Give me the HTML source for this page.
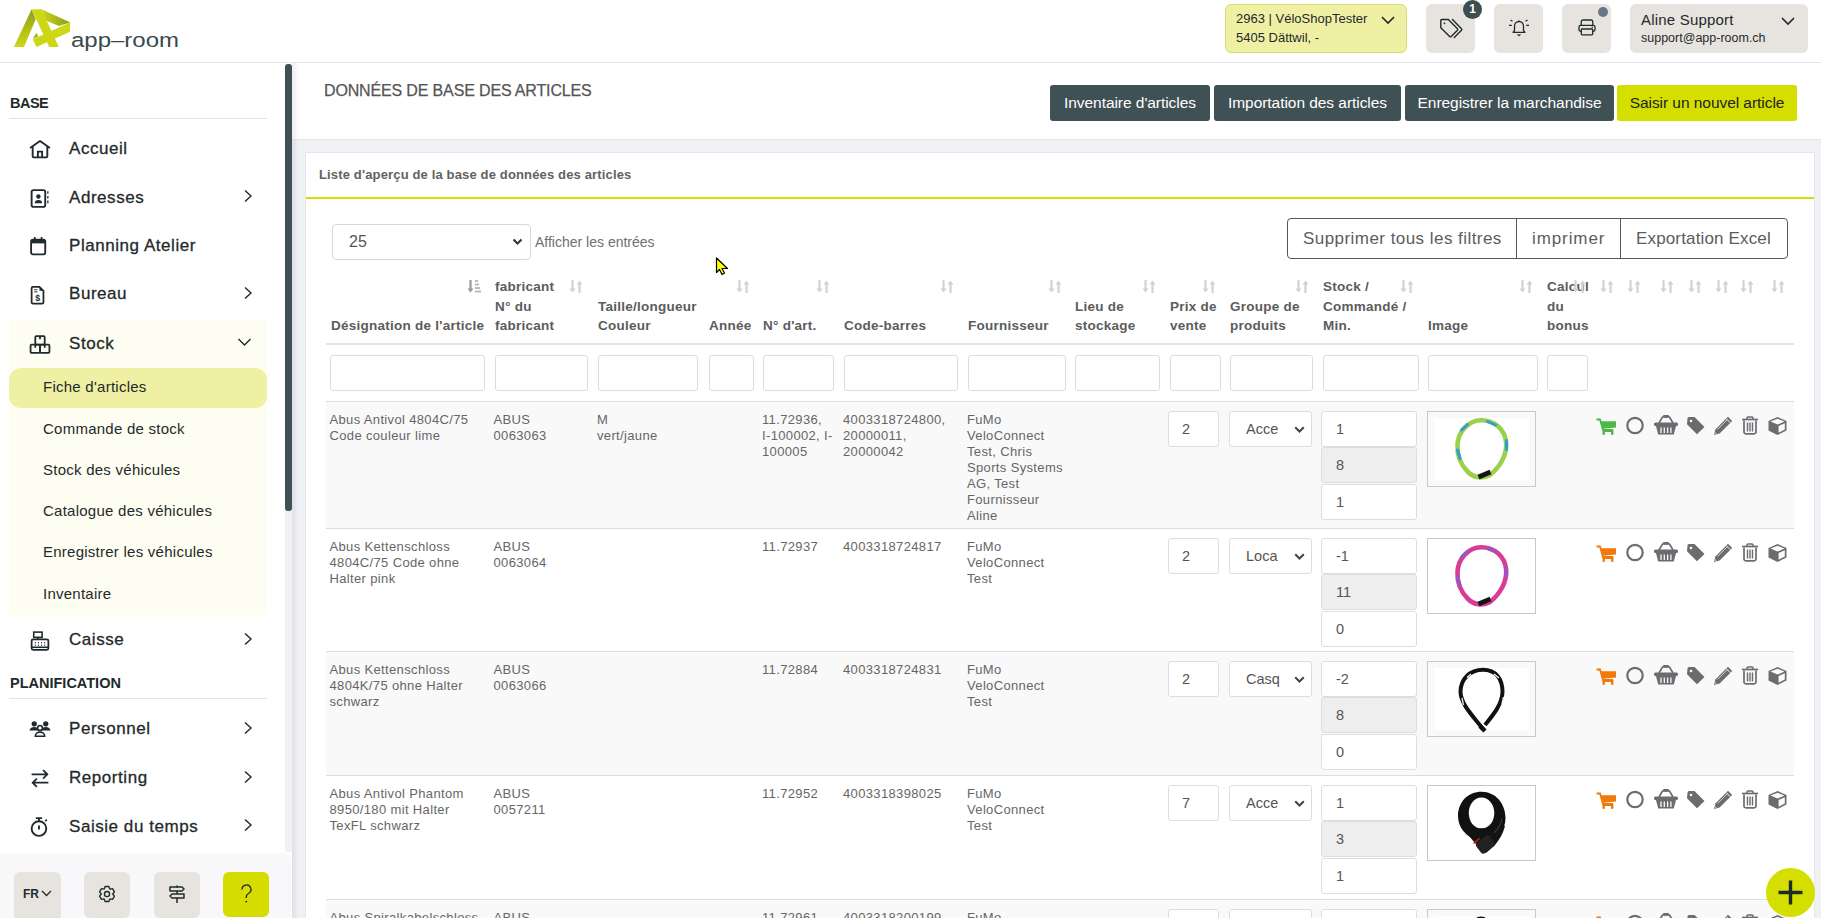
<!DOCTYPE html><html><head><meta charset="utf-8"><style>
*{box-sizing:border-box;margin:0;padding:0}
html,body{width:1821px;height:918px;overflow:hidden;background:#fff;font-family:"Liberation Sans",sans-serif}
.ab{position:absolute}
.t{position:absolute;white-space:nowrap;line-height:1}
.sb{color:#1f2a2c}
.nav{position:absolute;left:69px;font-size:17px;letter-spacing:0.55px;color:#1f2a2c;white-space:nowrap;line-height:1;-webkit-text-stroke:0.3px #1f2a2c}
.sub{position:absolute;left:43px;font-size:15px;letter-spacing:0.25px;color:#1f2a2c;white-space:nowrap;line-height:1}
.chev{position:absolute;left:243px;width:10px;height:14px}
.hb{position:absolute;top:4px;height:49px;background:#e7e4df;border-radius:6px}
.btn{position:absolute;top:85px;height:36px;background:#3f5154;color:#fff;border-radius:3px;font-size:15.5px;letter-spacing:-0.05px;line-height:36px;text-align:center;white-space:nowrap}
.th{position:absolute;margin-top:1px;font-size:13.5px;font-weight:bold;color:#5c5c5c;line-height:19.5px;white-space:nowrap;letter-spacing:0.25px}
.fi{position:absolute;top:355px;height:36px;border:1px solid #dcdcdc;border-radius:3px;background:#fff}
.sort{position:absolute;top:280px;width:14px;height:13px}
.row{position:absolute;left:326px;width:1468px;border-top:1px solid #ddd}
.c{position:absolute;margin-top:1px;font-size:13px;color:#666;line-height:16px;white-space:nowrap;letter-spacing:0.35px}
.inp{position:absolute;height:36px;border:1px solid #ddd;border-radius:3px;background:#fff;font-size:14.5px;color:#555;line-height:34px}
.img{position:absolute;width:109px;height:76px;border:1px solid #c8c8c8}
</style></head><body>
<div class="ab" style="left:0;top:0;width:1821px;height:63px;background:#fff;border-bottom:1px solid #e6e6ea"></div>
<svg class="ab" style="left:0;top:0" width="70" height="50" viewBox="0 0 70 50">
<defs>
<linearGradient id="lg1" x1="0" y1="0" x2="0" y2="1"><stop offset="0" stop-color="#8f9a1e"/><stop offset="0.55" stop-color="#b3bf18"/><stop offset="1" stop-color="#cbd716"/></linearGradient>
<linearGradient id="lg2" x1="0" y1="0" x2="1" y2="0"><stop offset="0" stop-color="#cbd716"/><stop offset="1" stop-color="#8f9a1e"/></linearGradient>
</defs>
<polygon points="31.6,9.2 35.7,19.2 24,46.9 13.9,46.9" fill="url(#lg1)"/>
<polygon points="41.4,9.2 70.5,22.4 59,26 46.3,20.7" fill="url(#lg2)"/>
<polygon points="31.6,9.2 41.4,9.2 58.8,46.9 49.2,46.9" fill="#ccd816"/>
<polygon points="70.5,22.4 70.3,31.7 36.5,46.9 32.8,39.3" fill="#ccd816"/>
<polygon points="32.8,38.8 36.5,32.7 38.2,36.4" fill="#a5b01a"/>
</svg>
<svg class="ab" style="left:70px;top:24px" width="115" height="30"><text x="1" y="22.8" font-family="Liberation Sans" font-size="20.5" fill="#384a4d" textLength="108" lengthAdjust="spacingAndGlyphs">app–room</text></svg>
<div class="ab" style="left:1225px;top:4px;width:182px;height:49px;background:#f0f0a5;border:1px solid #d9dc70;border-radius:6px"></div>
<div class="t" style="left:1236px;top:12px;font-size:13px;color:#1f2a2c">2963 | VéloShopTester</div>
<div class="t" style="left:1236px;top:31px;font-size:13px;color:#1f2a2c">5405 Dättwil, -</div>
<svg class="ab" style="left:1381px;top:15px" width="14" height="10"><polyline points="1,2 7,8 13,2" fill="none" stroke="#1f2a2c" stroke-width="1.6"/></svg>
<div class="hb" style="left:1426px;width:49px"></div>
<svg class="ab" style="left:1439px;top:18px" width="26" height="22" viewBox="0 0 26 22"><path d="M1.8 2.5 a1 1 0 0 1 1 -1 h6.5 l9.2 9.2 a1.2 1.2 0 0 1 0 1.6 l-6.3 6.3 a1.2 1.2 0 0 1 -1.6 0 l-8.8 -8.8 z" fill="none" stroke="#1f2a2c" stroke-width="1.4" stroke-linejoin="round"/><path d="M13.5 1.5 l9 9.2 a1.2 1.2 0 0 1 0 1.6 l-7.2 7.2" fill="none" stroke="#1f2a2c" stroke-width="1.4" stroke-linejoin="round" stroke-linecap="round"/><circle cx="5.5" cy="5.3" r="0.9" fill="#1f2a2c"/></svg>
<div class="ab" style="left:1463px;top:-0.5px;width:19px;height:19px;border-radius:50%;background:#3d4e50;color:#fff;font-size:12px;font-weight:bold;text-align:center;line-height:19px">1</div>
<div class="hb" style="left:1494px;width:49px"></div>
<svg class="ab" style="left:1508px;top:18px" width="22" height="19" viewBox="0 0 22 19"><path d="M6.5 12.5 v-4.5 a4.5 4.5 0 0 1 9 0 v4.5 l1.5 1.8 h-12 z" fill="none" stroke="#1f2a2c" stroke-width="1.3" stroke-linejoin="round"/><path d="M9.5 16.5 l1.5 1 1.5 -1" fill="none" stroke="#1f2a2c" stroke-width="1.2"/><path d="M1 7.3 h2.8 M18.2 7.3 h2.8 M2.5 2 l2 1.3 M19.5 2 l-2 1.3 M11 2.2 v0.6" stroke="#1f2a2c" stroke-width="1.2"/></svg>
<div class="hb" style="left:1562px;width:49px"></div>
<svg class="ab" style="left:1578px;top:19px" width="18" height="17" viewBox="0 0 18 17"><path d="M3.2 6 v-3.2 a1.8 1.8 0 0 1 1.8 -1.8 h8 a1.8 1.8 0 0 1 1.8 1.8 v3.2" fill="none" stroke="#1f2a2c" stroke-width="1.3"/><rect x="1" y="6.3" width="16" height="6" rx="1.8" fill="none" stroke="#1f2a2c" stroke-width="1.3"/><rect x="3.3" y="10" width="11.4" height="5.8" rx="0.8" fill="#e7e4df" stroke="#1f2a2c" stroke-width="1.3"/><circle cx="14.2" cy="8.3" r="0.7" fill="#1f2a2c"/></svg>
<div class="ab" style="left:1598px;top:7px;width:10px;height:10px;border-radius:50%;background:#67758a"></div>
<div class="hb" style="left:1630px;width:178px"></div>
<div class="t" style="left:1641px;top:12px;font-size:15px;letter-spacing:0.2px;color:#1f2a2c">Aline Support</div>
<div class="t" style="left:1641px;top:32px;font-size:12.5px;color:#1f2a2c">support@app-room.ch</div>
<svg class="ab" style="left:1781px;top:16px" width="14" height="10"><polyline points="1,2 7,8 13,2" fill="none" stroke="#1f2a2c" stroke-width="1.6"/></svg>
<div class="ab" style="left:0;top:63px;width:292px;height:855px;background:#fff"></div>
<div class="ab" style="left:292px;top:63px;width:10px;height:855px;background:linear-gradient(to right,rgba(0,0,0,0.07),rgba(0,0,0,0))"></div>
<div class="ab" style="left:285px;top:64px;width:7px;height:788px;background:#f1f1f3;border-radius:3px"></div>
<div class="ab" style="left:285px;top:64px;width:7px;height:447px;background:#3f5154;border-radius:3px"></div>
<div class="t" style="left:10px;top:95.5px;font-size:14.5px;font-weight:bold;color:#1f2a2c;letter-spacing:-0.5px">BASE</div>
<div class="ab" style="left:9px;top:118px;width:258px;height:1px;background:#e3e4ea"></div>
<div class="ab" style="left:9px;top:319px;width:258px;height:296px;background:#fdfdf1"></div>
<div class="ab" style="left:9px;top:368px;width:258px;height:40px;background:#eff0a3;border-radius:12px"></div>
<div class="nav" style="top:139.5px">Accueil</div>
<div class="nav" style="top:188.5px">Adresses</div>
<svg class="chev" style="top:189.2px" viewBox="0 0 10 14"><polyline points="2,1.5 8,7 2,12.5" fill="none" stroke="#1f2a2c" stroke-width="1.4"/></svg>
<div class="nav" style="top:236.8px">Planning Atelier</div>
<div class="nav" style="top:285.4px">Bureau</div>
<svg class="chev" style="top:286.1px" viewBox="0 0 10 14"><polyline points="2,1.5 8,7 2,12.5" fill="none" stroke="#1f2a2c" stroke-width="1.4"/></svg>
<div class="nav" style="top:335.0px">Stock</div>
<div class="nav" style="top:631.3px">Caisse</div>
<svg class="chev" style="top:632.0px" viewBox="0 0 10 14"><polyline points="2,1.5 8,7 2,12.5" fill="none" stroke="#1f2a2c" stroke-width="1.4"/></svg>
<div class="nav" style="top:719.8px">Personnel</div>
<svg class="chev" style="top:720.5px" viewBox="0 0 10 14"><polyline points="2,1.5 8,7 2,12.5" fill="none" stroke="#1f2a2c" stroke-width="1.4"/></svg>
<div class="nav" style="top:769.0px">Reporting</div>
<svg class="chev" style="top:769.7px" viewBox="0 0 10 14"><polyline points="2,1.5 8,7 2,12.5" fill="none" stroke="#1f2a2c" stroke-width="1.4"/></svg>
<div class="nav" style="top:817.5px">Saisie du temps</div>
<svg class="chev" style="top:818.2px" viewBox="0 0 10 14"><polyline points="2,1.5 8,7 2,12.5" fill="none" stroke="#1f2a2c" stroke-width="1.4"/></svg>
<svg class="ab" style="left:237px;top:337px" width="15" height="10"><polyline points="1.5,2 7.5,8 13.5,2" fill="none" stroke="#1f2a2c" stroke-width="1.4"/></svg>
<div class="sub" style="top:379.4px">Fiche d'articles</div>
<div class="sub" style="top:421.2px">Commande de stock</div>
<div class="sub" style="top:462.2px">Stock des véhicules</div>
<div class="sub" style="top:503.4px">Catalogue des véhicules</div>
<div class="sub" style="top:544.4px">Enregistrer les véhicules</div>
<div class="sub" style="top:585.9px">Inventaire</div>
<div class="t" style="left:10px;top:675.5px;font-size:14.5px;font-weight:bold;color:#1f2a2c;letter-spacing:0px">PLANIFICATION</div>
<div class="ab" style="left:9px;top:698px;width:258px;height:1px;background:#e3e4ea"></div>
<svg class="ab" style="left:28px;top:137.7px" width="24" height="22" viewBox="0 0 22 21"><path d="M1.5 9.5 L11 2.8 L20.5 9.5" fill="none" stroke="#1f2a2c" stroke-width="1.8" stroke-linejoin="round"/><path d="M4 8 V17.5 a1 1 0 0 0 1 1 H17 a1 1 0 0 0 1 -1 V8" fill="none" stroke="#1f2a2c" stroke-width="1.8"/><path d="M9 18.5 V13 H13 V18.5" fill="none" stroke="#1f2a2c" stroke-width="1.8"/></svg>
<svg class="ab" style="left:28px;top:186.7px" width="24" height="22" viewBox="0 0 22 21"><rect x="3" y="3" width="13" height="16" rx="1.8" fill="none" stroke="#1f2a2c" stroke-width="1.8"/><circle cx="9.5" cy="9" r="2.1" fill="#1f2a2c"/><path d="M6 15.5 a3.5 3 0 0 1 7 0 z" fill="#1f2a2c"/><path d="M18.5 4 v2.5 M18.5 8.5 v2.5 M18.5 13 v2.5" stroke="#1f2a2c" stroke-width="1.2"/></svg>
<svg class="ab" style="left:28px;top:235.0px" width="24" height="22" viewBox="0 0 22 21"><rect x="2.5" y="4.5" width="13.5" height="14" rx="1.8" fill="none" stroke="#1f2a2c" stroke-width="1.8"/><rect x="2.5" y="4.5" width="13.5" height="3.5" fill="#1f2a2c"/><path d="M6 2 v3 M12.5 2 v3" stroke="#1f2a2c" stroke-width="1.6"/></svg>
<svg class="ab" style="left:28px;top:283.6px" width="24" height="22" viewBox="0 0 22 21"><path d="M3 4 a1.3 1.3 0 0 1 1.3 -1.3 h6.2 l3.8 3.8 v11 a1.3 1.3 0 0 1 -1.3 1.3 h-8.7 a1.3 1.3 0 0 1 -1.3 -1.3 z" fill="none" stroke="#1f2a2c" stroke-width="1.7"/><path d="M10.5 2.7 v3.8 h3.8 z" fill="#1f2a2c"/><path d="M5.5 5.5 h3 M5.5 7.5 h3" stroke="#1f2a2c" stroke-width="0.9"/><text x="8.8" y="16.3" font-size="8.5" font-weight="bold" text-anchor="middle" fill="#1f2a2c" font-family="Liberation Sans">$</text></svg>
<svg class="ab" style="left:28px;top:333.2px" width="24" height="22" viewBox="0 0 22 21"><rect x="2" y="11" width="9" height="8" rx="1" fill="none" stroke="#1f2a2c" stroke-width="1.7"/><rect x="11" y="11" width="9" height="8" rx="1" fill="none" stroke="#1f2a2c" stroke-width="1.7"/><rect x="6.5" y="3" width="9" height="8" rx="1" fill="none" stroke="#1f2a2c" stroke-width="1.7"/><path d="M11 3 v3 M6.5 11 v3 M15.5 11 v3" stroke="#1f2a2c" stroke-width="1.7"/></svg>
<svg class="ab" style="left:28px;top:629.5px" width="24" height="22" viewBox="0 0 22 21"><rect x="3" y="9" width="16" height="10" rx="1.5" fill="none" stroke="#1f2a2c" stroke-width="1.7"/><rect x="5" y="2" width="8" height="5" fill="none" stroke="#1f2a2c" stroke-width="1.5"/><path d="M9 7 v2" stroke="#1f2a2c" stroke-width="1.5"/><path d="M6 12 h1 M9 12 h1 M12 12 h1 M15 12 h1 M6 14.5 h1 M9 14.5 h1 M12 14.5 h1 M15 14.5 h1" stroke="#1f2a2c" stroke-width="1.3"/><path d="M3 16.5 h16" stroke="#1f2a2c" stroke-width="1.5"/></svg>
<svg class="ab" style="left:28px;top:718.0px" width="24" height="22" viewBox="0 0 22 21"><circle cx="5.5" cy="5.5" r="2.5" fill="#1f2a2c"/><circle cx="16.5" cy="5.5" r="2.5" fill="#1f2a2c"/><path d="M1 12 a4.5 3.5 0 0 1 9 0 z M12 12 a4.5 3.5 0 0 1 9 0 z" fill="#1f2a2c"/><circle cx="11" cy="9.5" r="2.3" fill="#fff" stroke="#1f2a2c" stroke-width="1.5"/><path d="M6.5 17.5 a4.5 4 0 0 1 9 0 z" fill="#fff" stroke="#1f2a2c" stroke-width="1.5"/></svg>
<svg class="ab" style="left:28px;top:767.2px" width="24" height="22" viewBox="0 0 22 21"><path d="M3 7 h15 M14 3 l4 4 -4 4" fill="none" stroke="#1f2a2c" stroke-width="1.7"/><path d="M19 15 h-15 M8 11 l-4 4 4 4" fill="none" stroke="#1f2a2c" stroke-width="1.7"/></svg>
<svg class="ab" style="left:28px;top:815.7px" width="24" height="22" viewBox="0 0 22 21"><circle cx="10" cy="12" r="7" fill="none" stroke="#1f2a2c" stroke-width="1.8"/><path d="M7 2 h6 M10 2 v3 M10 9 v4" stroke="#1f2a2c" stroke-width="1.8"/><path d="M16 5 l1.5 -1.5" stroke="#1f2a2c" stroke-width="1.6"/></svg>
<div class="ab" style="left:0;top:853px;width:291px;height:65px;background:#f8f8fa;border-top-right-radius:8px"></div>
<div class="ab" style="left:14px;top:872px;width:47px;height:50px;background:#e7e4df;border-radius:6px"></div>
<div class="t" style="left:23px;top:887.5px;font-size:12px;font-weight:bold;color:#1f2a2c">FR</div>
<svg class="ab" style="left:41px;top:890px" width="11" height="7"><polyline points="1,1 5.5,5.5 10,1" fill="none" stroke="#1f2a2c" stroke-width="1.3"/></svg>
<div class="ab" style="left:84px;top:872px;width:46px;height:46px;background:#e7e4df;border-radius:6px"></div>
<svg class="ab" style="left:98px;top:885px" width="18" height="18" viewBox="0 0 24 24"><path d="M9.51 2.01 L14.49 2.01 L15.80 5.42 L19.41 4.85 L21.90 9.16 L19.60 12.00 L21.90 14.84 L19.41 19.15 L15.80 18.58 L14.49 21.99 L9.51 21.99 L8.20 18.58 L4.59 19.15 L2.10 14.84 L4.40 12.00 L2.10 9.16 L4.59 4.85 L8.20 5.42 Z" fill="none" stroke="#1f2a2c" stroke-width="1.8" stroke-linejoin="round"/><circle cx="12" cy="12" r="3.4" fill="none" stroke="#1f2a2c" stroke-width="1.8"/></svg>
<div class="ab" style="left:154px;top:872px;width:46px;height:46px;background:#e7e4df;border-radius:6px"></div>
<svg class="ab" style="left:168px;top:885px" width="18" height="18" viewBox="0 0 18 18"><path d="M2 2 h12 l2 2 -2 2 h-12 z M16 9 h-12 l-2 2 2 2 h12 z" fill="none" stroke="#1f2a2c" stroke-width="1.5" stroke-linejoin="round"/><path d="M9 0.5 v2 M9 6 v3 M9 13 v5" stroke="#1f2a2c" stroke-width="1.5"/></svg>
<div class="ab" style="left:223px;top:872px;width:46px;height:45px;background:#d4dc00;border-radius:6px"></div>
<svg class="ab" style="left:240px;top:884px" width="13" height="20" viewBox="0 0 13 20"><path d="M2 5.5 a4.5 4.5 0 1 1 6.5 4 c-1.5 0.8 -2.2 1.6 -2.2 3.3 v1.2" fill="none" stroke="#1f2a2c" stroke-width="1.3"/><circle cx="6.3" cy="17.6" r="0.9" fill="#1f2a2c"/></svg>
<div class="ab" style="left:292px;top:63px;width:1529px;height:855px;background:#f0f1f4"></div>
<div class="ab" style="left:292px;top:63px;width:1529px;height:77px;background:#fff;border-bottom:1px solid #e4e5e9"></div>
<div class="ab" style="left:292px;top:63px;width:7px;height:855px;background:linear-gradient(to right,rgba(0,0,0,0.07),rgba(0,0,0,0))"></div>
<div class="t" style="left:324px;top:83px;font-size:16px;color:#555;letter-spacing:-0.15px;-webkit-text-stroke:0.25px #555">DONNÉES DE BASE DES ARTICLES</div>
<div class="btn" style="left:1050px;width:160px;background:#3f5154;color:#fff">Inventaire d'articles</div>
<div class="btn" style="left:1214px;width:187px;background:#3f5154;color:#fff">Importation des articles</div>
<div class="btn" style="left:1405px;width:209px;background:#3f5154;color:#fff">Enregistrer la marchandise</div>
<div class="btn" style="left:1617px;width:180px;background:#d4df00;color:#222">Saisir un nouvel article</div>
<div class="ab" style="left:305px;top:152px;width:1510px;height:766px;background:#fff;border:1px solid #e6e7ea;border-bottom:none"></div>
<div class="t" style="left:319px;top:168px;font-size:13px;font-weight:bold;color:#626262;letter-spacing:0.15px">Liste d&#39;aperçu de la base de données des articles</div>
<div class="ab" style="left:306px;top:197px;width:1508px;height:2px;background:#d4df00"></div>
<div class="ab" style="left:332px;top:224px;width:199px;height:36px;border:1px solid #d8d8d8;border-radius:4px;background:#fff"></div>
<div class="t" style="left:349px;top:234px;font-size:16px;color:#555">25</div>
<svg class="ab" style="left:512px;top:238px" width="11" height="8"><polyline points="1.5,1.5 5.5,5.5 9.5,1.5" fill="none" stroke="#333" stroke-width="2"/></svg>
<div class="t" style="left:535px;top:235px;font-size:14px;color:#707070">Afficher les entrées</div>
<div class="ab" style="left:1287px;top:218px;width:501px;height:41px;border:1px solid #4d5a5c;border-radius:4px;background:#fff"></div>
<div class="ab" style="left:1516px;top:218px;width:1px;height:41px;background:#4d5a5c"></div>
<div class="ab" style="left:1620px;top:218px;width:1px;height:41px;background:#4d5a5c"></div>
<div class="t" style="left:1303px;top:230px;font-size:17px;color:#5c5c5c;letter-spacing:0.45px">Supprimer tous les filtres</div>
<div class="t" style="left:1532px;top:230px;font-size:17px;color:#5c5c5c;letter-spacing:0.9px">imprimer</div>
<div class="t" style="left:1636px;top:230px;font-size:17px;color:#5c5c5c;letter-spacing:0.15px">Exportation Excel</div>
<div class="th" style="left:331px;top:315.0px">Désignation de l&#39;article</div>
<div class="th" style="left:495px;top:276.0px">fabricant</div>
<div class="th" style="left:495px;top:295.5px">N° du</div>
<div class="th" style="left:495px;top:315.0px">fabricant</div>
<div class="th" style="left:598px;top:295.5px">Taille/longueur</div>
<div class="th" style="left:598px;top:315.0px">Couleur</div>
<div class="th" style="left:709px;top:315.0px">Année</div>
<div class="th" style="left:763px;top:315.0px">N° d&#39;art.</div>
<div class="th" style="left:844px;top:315.0px">Code-barres</div>
<div class="th" style="left:968px;top:315.0px">Fournisseur</div>
<div class="th" style="left:1075px;top:295.5px">Lieu de</div>
<div class="th" style="left:1075px;top:315.0px">stockage</div>
<div class="th" style="left:1170px;top:295.5px">Prix de</div>
<div class="th" style="left:1170px;top:315.0px">vente</div>
<div class="th" style="left:1230px;top:295.5px">Groupe de</div>
<div class="th" style="left:1230px;top:315.0px">produits</div>
<div class="th" style="left:1323px;top:276.0px">Stock /</div>
<div class="th" style="left:1323px;top:295.5px">Commandé /</div>
<div class="th" style="left:1323px;top:315.0px">Min.</div>
<div class="th" style="left:1428px;top:315.0px">Image</div>
<div class="th" style="left:1547px;top:276.0px">Calcul</div>
<div class="th" style="left:1547px;top:295.5px">du</div>
<div class="th" style="left:1547px;top:315.0px">bonus</div>
<div class="ab" style="left:326px;top:343px;width:1468px;height:2px;background:#e2e2e2"></div>
<div class="fi" style="left:330px;width:155px"></div>
<div class="fi" style="left:495px;width:93px"></div>
<div class="fi" style="left:598px;width:100px"></div>
<div class="fi" style="left:709px;width:45px"></div>
<div class="fi" style="left:763px;width:71px"></div>
<div class="fi" style="left:844px;width:114px"></div>
<div class="fi" style="left:968px;width:98px"></div>
<div class="fi" style="left:1075px;width:85px"></div>
<div class="fi" style="left:1170px;width:51px"></div>
<div class="fi" style="left:1230px;width:83px"></div>
<div class="fi" style="left:1323px;width:96px"></div>
<div class="fi" style="left:1428px;width:110px"></div>
<div class="fi" style="left:1547px;width:41px"></div>
<svg class="sort" style="left:569px" viewBox="0 0 14 13"><path d="M3.5 0 v10" stroke="#d2d2d2" stroke-width="2.2"/><path d="M0.5 8.5 l3 4 3 -4z" fill="#d2d2d2"/><path d="M10.5 13 v-10" stroke="#d2d2d2" stroke-width="2.2"/><path d="M7.5 4.5 l3 -4 3 4z" fill="#d2d2d2"/></svg>
<svg class="sort" style="left:735.5px" viewBox="0 0 14 13"><path d="M3.5 0 v10" stroke="#d2d2d2" stroke-width="2.2"/><path d="M0.5 8.5 l3 4 3 -4z" fill="#d2d2d2"/><path d="M10.5 13 v-10" stroke="#d2d2d2" stroke-width="2.2"/><path d="M7.5 4.5 l3 -4 3 4z" fill="#d2d2d2"/></svg>
<svg class="sort" style="left:816px" viewBox="0 0 14 13"><path d="M3.5 0 v10" stroke="#d2d2d2" stroke-width="2.2"/><path d="M0.5 8.5 l3 4 3 -4z" fill="#d2d2d2"/><path d="M10.5 13 v-10" stroke="#d2d2d2" stroke-width="2.2"/><path d="M7.5 4.5 l3 -4 3 4z" fill="#d2d2d2"/></svg>
<svg class="sort" style="left:940px" viewBox="0 0 14 13"><path d="M3.5 0 v10" stroke="#d2d2d2" stroke-width="2.2"/><path d="M0.5 8.5 l3 4 3 -4z" fill="#d2d2d2"/><path d="M10.5 13 v-10" stroke="#d2d2d2" stroke-width="2.2"/><path d="M7.5 4.5 l3 -4 3 4z" fill="#d2d2d2"/></svg>
<svg class="sort" style="left:1048px" viewBox="0 0 14 13"><path d="M3.5 0 v10" stroke="#d2d2d2" stroke-width="2.2"/><path d="M0.5 8.5 l3 4 3 -4z" fill="#d2d2d2"/><path d="M10.5 13 v-10" stroke="#d2d2d2" stroke-width="2.2"/><path d="M7.5 4.5 l3 -4 3 4z" fill="#d2d2d2"/></svg>
<svg class="sort" style="left:1142px" viewBox="0 0 14 13"><path d="M3.5 0 v10" stroke="#d2d2d2" stroke-width="2.2"/><path d="M0.5 8.5 l3 4 3 -4z" fill="#d2d2d2"/><path d="M10.5 13 v-10" stroke="#d2d2d2" stroke-width="2.2"/><path d="M7.5 4.5 l3 -4 3 4z" fill="#d2d2d2"/></svg>
<svg class="sort" style="left:1202px" viewBox="0 0 14 13"><path d="M3.5 0 v10" stroke="#d2d2d2" stroke-width="2.2"/><path d="M0.5 8.5 l3 4 3 -4z" fill="#d2d2d2"/><path d="M10.5 13 v-10" stroke="#d2d2d2" stroke-width="2.2"/><path d="M7.5 4.5 l3 -4 3 4z" fill="#d2d2d2"/></svg>
<svg class="sort" style="left:1295px" viewBox="0 0 14 13"><path d="M3.5 0 v10" stroke="#d2d2d2" stroke-width="2.2"/><path d="M0.5 8.5 l3 4 3 -4z" fill="#d2d2d2"/><path d="M10.5 13 v-10" stroke="#d2d2d2" stroke-width="2.2"/><path d="M7.5 4.5 l3 -4 3 4z" fill="#d2d2d2"/></svg>
<svg class="sort" style="left:1400px" viewBox="0 0 14 13"><path d="M3.5 0 v10" stroke="#d2d2d2" stroke-width="2.2"/><path d="M0.5 8.5 l3 4 3 -4z" fill="#d2d2d2"/><path d="M10.5 13 v-10" stroke="#d2d2d2" stroke-width="2.2"/><path d="M7.5 4.5 l3 -4 3 4z" fill="#d2d2d2"/></svg>
<svg class="sort" style="left:1519px" viewBox="0 0 14 13"><path d="M3.5 0 v10" stroke="#d2d2d2" stroke-width="2.2"/><path d="M0.5 8.5 l3 4 3 -4z" fill="#d2d2d2"/><path d="M10.5 13 v-10" stroke="#d2d2d2" stroke-width="2.2"/><path d="M7.5 4.5 l3 -4 3 4z" fill="#d2d2d2"/></svg>
<svg class="sort" style="left:1572px" viewBox="0 0 14 13"><path d="M3.5 0 v10" stroke="#d2d2d2" stroke-width="2.2"/><path d="M0.5 8.5 l3 4 3 -4z" fill="#d2d2d2"/><path d="M10.5 13 v-10" stroke="#d2d2d2" stroke-width="2.2"/><path d="M7.5 4.5 l3 -4 3 4z" fill="#d2d2d2"/></svg>
<svg class="sort" style="left:1600px" viewBox="0 0 14 13"><path d="M3.5 0 v10" stroke="#d2d2d2" stroke-width="2.2"/><path d="M0.5 8.5 l3 4 3 -4z" fill="#d2d2d2"/><path d="M10.5 13 v-10" stroke="#d2d2d2" stroke-width="2.2"/><path d="M7.5 4.5 l3 -4 3 4z" fill="#d2d2d2"/></svg>
<svg class="sort" style="left:1627px" viewBox="0 0 14 13"><path d="M3.5 0 v10" stroke="#d2d2d2" stroke-width="2.2"/><path d="M0.5 8.5 l3 4 3 -4z" fill="#d2d2d2"/><path d="M10.5 13 v-10" stroke="#d2d2d2" stroke-width="2.2"/><path d="M7.5 4.5 l3 -4 3 4z" fill="#d2d2d2"/></svg>
<svg class="sort" style="left:1660px" viewBox="0 0 14 13"><path d="M3.5 0 v10" stroke="#d2d2d2" stroke-width="2.2"/><path d="M0.5 8.5 l3 4 3 -4z" fill="#d2d2d2"/><path d="M10.5 13 v-10" stroke="#d2d2d2" stroke-width="2.2"/><path d="M7.5 4.5 l3 -4 3 4z" fill="#d2d2d2"/></svg>
<svg class="sort" style="left:1688px" viewBox="0 0 14 13"><path d="M3.5 0 v10" stroke="#d2d2d2" stroke-width="2.2"/><path d="M0.5 8.5 l3 4 3 -4z" fill="#d2d2d2"/><path d="M10.5 13 v-10" stroke="#d2d2d2" stroke-width="2.2"/><path d="M7.5 4.5 l3 -4 3 4z" fill="#d2d2d2"/></svg>
<svg class="sort" style="left:1715px" viewBox="0 0 14 13"><path d="M3.5 0 v10" stroke="#d2d2d2" stroke-width="2.2"/><path d="M0.5 8.5 l3 4 3 -4z" fill="#d2d2d2"/><path d="M10.5 13 v-10" stroke="#d2d2d2" stroke-width="2.2"/><path d="M7.5 4.5 l3 -4 3 4z" fill="#d2d2d2"/></svg>
<svg class="sort" style="left:1740px" viewBox="0 0 14 13"><path d="M3.5 0 v10" stroke="#d2d2d2" stroke-width="2.2"/><path d="M0.5 8.5 l3 4 3 -4z" fill="#d2d2d2"/><path d="M10.5 13 v-10" stroke="#d2d2d2" stroke-width="2.2"/><path d="M7.5 4.5 l3 -4 3 4z" fill="#d2d2d2"/></svg>
<svg class="sort" style="left:1771px" viewBox="0 0 14 13"><path d="M3.5 0 v10" stroke="#d2d2d2" stroke-width="2.2"/><path d="M0.5 8.5 l3 4 3 -4z" fill="#d2d2d2"/><path d="M10.5 13 v-10" stroke="#d2d2d2" stroke-width="2.2"/><path d="M7.5 4.5 l3 -4 3 4z" fill="#d2d2d2"/></svg>
<svg class="sort" style="left:467px" viewBox="0 0 14 13"><path d="M3.5 0 v10" stroke="#999" stroke-width="2.2"/><path d="M0.5 8.5 l3 4 3 -4z" fill="#999"/><path d="M8 1 h3 M8 4.5 h4 M8 8 h5 M8 11.5 h6" stroke="#bbb" stroke-width="2"/></svg>
<div class="row" style="top:401px;height:127px;background:#f9f9f9"></div>
<div class="c" style="left:329.5px;top:411px">Abus Antivol 4804C/75</div>
<div class="c" style="left:329.5px;top:427px">Code couleur lime</div>
<div class="c" style="left:493.5px;top:411px">ABUS</div>
<div class="c" style="left:493.5px;top:427px">0063063</div>
<div class="c" style="left:597px;top:411px">M</div>
<div class="c" style="left:597px;top:427px">vert/jaune</div>
<div class="c" style="left:762px;top:411px">11.72936,</div>
<div class="c" style="left:762px;top:427px">I-100002, I-</div>
<div class="c" style="left:762px;top:443px">100005</div>
<div class="c" style="left:843px;top:411px">4003318724800,</div>
<div class="c" style="left:843px;top:427px">20000011,</div>
<div class="c" style="left:843px;top:443px">20000042</div>
<div class="c" style="left:967px;top:411px">FuMo</div>
<div class="c" style="left:967px;top:427px">VeloConnect</div>
<div class="c" style="left:967px;top:443px">Test, Chris</div>
<div class="c" style="left:967px;top:459px">Sports Systems</div>
<div class="c" style="left:967px;top:475px">AG, Test</div>
<div class="c" style="left:967px;top:491px">Fournisseur</div>
<div class="c" style="left:967px;top:507px">Aline</div>
<div class="inp" style="left:1168px;top:411px;width:51px;padding-left:13px">2</div>
<div class="inp" style="left:1229px;top:411px;width:83px;padding-left:16px">Acce</div>
<svg class="ab" style="left:1294px;top:426px" width="11" height="7"><polyline points="1.2,1.2 5.5,5.5 9.8,1.2" fill="none" stroke="#444" stroke-width="2"/></svg>
<div class="inp" style="left:1321px;top:411px;width:96px;padding-left:14px">1</div>
<div class="inp" style="left:1321px;top:447px;width:96px;padding-left:14px;background:#eee">8</div>
<div class="inp" style="left:1321px;top:484px;width:96px;padding-left:14px">1</div>
<div class="img" style="left:1427px;top:411px"></div>
<svg class="ab" style="left:1428px;top:412px" width="107" height="74" viewBox="0 0 107 74"><rect x="6" y="6" width="95" height="62" fill="#fff"/><path d="M53 8.2 C 66 8 77 17 78.2 31 C 79 43 72 55 62 63 C 55 67 46 66 40 60 C 32 52 29 42 29.5 33 C 30 20 40 8.5 53 8.2 Z" fill="none" stroke="#9bd04a" stroke-width="4.6"/><path d="M33.5 18 l6 -5.5 M59.5 9.5 l8 3.5 M78.5 28.5 l0 9 M29.5 38 l2.5 8.5" stroke="#2f9ed6" stroke-width="3" stroke-linecap="round"/><path d="M50.5 65 l12 -5" stroke="#151515" stroke-width="4.8"/></svg>
<svg class="ab" style="left:1596px;top:418px" width="21" height="18" viewBox="0 0 21 18"><path d="M0.5 1.5 h3.5 l3 10.5 h10" fill="none" stroke="#4db848" stroke-width="1.8"/><path d="M4.8 3.2 h15.2 v6.3 l-12.8 1.3 z" fill="#4db848"/><rect x="6.5" y="12" width="11" height="2" fill="#4db848"/><rect x="6.5" y="14" width="2.4" height="2.8" fill="#4db848"/><rect x="15" y="14" width="2.4" height="2.8" fill="#4db848"/></svg><svg class="ab" style="left:1625px;top:416px" width="20" height="19" viewBox="0 0 20 19"><circle cx="10" cy="9.5" r="7.7" fill="none" stroke="#6b6c70" stroke-width="2.2"/></svg><svg class="ab" style="left:1653px;top:414px" width="26" height="22" viewBox="0 0 26 22"><path d="M6 9 L9.5 3 h7 L20 9" fill="none" stroke="#6b6c70" stroke-width="1.7"/><rect x="10" y="1" width="6" height="2.6" rx="1" fill="#6b6c70"/><rect x="1" y="8.5" width="24" height="3.4" rx="1.5" fill="#6b6c70"/><path d="M3 12 h20 l-2.2 8.5 h-15.6 z" fill="#6b6c70"/><path d="M8 13.5 v5.5 M11.3 13.5 v5.5 M14.6 13.5 v5.5 M17.9 13.5 v5.5" stroke="#fafafa" stroke-width="1.3"/></svg><svg class="ab" style="left:1686px;top:416px" width="20" height="19" viewBox="0 0 20 19"><path d="M1.5 2.5 a1.5 1.5 0 0 1 1.5 -1.5 h5.5 l10 10 -7.5 7.3 -10 -10 z" fill="#6b6c70"/><circle cx="5" cy="5" r="1.3" fill="#fafafa"/></svg><svg class="ab" style="left:1713px;top:416px" width="20" height="20" viewBox="0 0 20 20"><path d="M15 0.8 l4.2 4.2 -12.6 12.6 -5.6 1.4 1.4 -5.6 z" fill="#6b6c70"/><path d="M13.2 2.6 l4.2 4.2" stroke="#fafafa" stroke-width="1"/><path d="M4.6 13.4 l9.6 -9.6" stroke="#fafafa" stroke-width="0.7"/><path d="M2.2 17.8 l1.6 -0.4 -1.2 -1.2 z" fill="#fafafa"/></svg><svg class="ab" style="left:1741px;top:416px" width="18" height="19" viewBox="0 0 18 19"><path d="M1 3.5 h16" stroke="#6b6c70" stroke-width="1.7"/><path d="M6 3.5 v-1.5 a1 1 0 0 1 1 -1 h4 a1 1 0 0 1 1 1 v1.5" fill="none" stroke="#6b6c70" stroke-width="1.5"/><path d="M3 4.5 v11.5 a1.8 1.8 0 0 0 1.8 1.8 h8.4 a1.8 1.8 0 0 0 1.8 -1.8 v-11.5" fill="none" stroke="#6b6c70" stroke-width="1.7"/><path d="M6.5 6.5 v9 M9 6.5 v9 M11.5 6.5 v9" stroke="#6b6c70" stroke-width="1.4"/></svg><svg class="ab" style="left:1767px;top:416px" width="21" height="20" viewBox="0 0 21 20"><path d="M10.5 1 L19.5 5 V14.5 L10.5 19 L1.5 14.5 V5 Z" fill="#6b6c70"/><path d="M10.5 2.8 L17.5 5.6 L10.5 8.6 L3.5 5.6 Z" fill="#fafafa"/><path d="M11.6 10 L17.8 7.2 V13.6 L11.6 16.8 Z" fill="#fafafa"/></svg>
<div class="row" style="top:528px;height:123px;background:#fff"></div>
<div class="c" style="left:329.5px;top:538px">Abus Kettenschloss</div>
<div class="c" style="left:329.5px;top:554px">4804C/75 Code ohne</div>
<div class="c" style="left:329.5px;top:570px">Halter pink</div>
<div class="c" style="left:493.5px;top:538px">ABUS</div>
<div class="c" style="left:493.5px;top:554px">0063064</div>
<div class="c" style="left:762px;top:538px">11.72937</div>
<div class="c" style="left:843px;top:538px">4003318724817</div>
<div class="c" style="left:967px;top:538px">FuMo</div>
<div class="c" style="left:967px;top:554px">VeloConnect</div>
<div class="c" style="left:967px;top:570px">Test</div>
<div class="inp" style="left:1168px;top:538px;width:51px;padding-left:13px">2</div>
<div class="inp" style="left:1229px;top:538px;width:83px;padding-left:16px">Loca</div>
<svg class="ab" style="left:1294px;top:553px" width="11" height="7"><polyline points="1.2,1.2 5.5,5.5 9.8,1.2" fill="none" stroke="#444" stroke-width="2"/></svg>
<div class="inp" style="left:1321px;top:538px;width:96px;padding-left:14px">-1</div>
<div class="inp" style="left:1321px;top:574px;width:96px;padding-left:14px;background:#eee">11</div>
<div class="inp" style="left:1321px;top:611px;width:96px;padding-left:14px">0</div>
<div class="img" style="left:1427px;top:538px"></div>
<svg class="ab" style="left:1428px;top:539px" width="107" height="74" viewBox="0 0 107 74"><rect x="6" y="6" width="95" height="62" fill="#fff"/><path d="M53 8.2 C 66 8 77 17 78.2 31 C 79 43 72 55 62 63 C 55 67 46 66 40 60 C 32 52 29 42 29.5 33 C 30 20 40 8.5 53 8.2 Z" fill="none" stroke="#d83c95" stroke-width="4.6"/><path d="M33.5 18 l6 -5.5 M59.5 9.5 l8 3.5 M78.5 28.5 l0 9 M29.5 38 l2.5 8.5" stroke="#9257c9" stroke-width="3" stroke-linecap="round"/><path d="M50.5 65 l12 -5" stroke="#151515" stroke-width="4.8"/></svg>
<svg class="ab" style="left:1596px;top:545px" width="21" height="18" viewBox="0 0 21 18"><path d="M0.5 1.5 h3.5 l3 10.5 h10" fill="none" stroke="#ef7a0a" stroke-width="1.8"/><path d="M4.8 3.2 h15.2 v6.3 l-12.8 1.3 z" fill="#ef7a0a"/><rect x="6.5" y="12" width="11" height="2" fill="#ef7a0a"/><rect x="6.5" y="14" width="2.4" height="2.8" fill="#ef7a0a"/><rect x="15" y="14" width="2.4" height="2.8" fill="#ef7a0a"/></svg><svg class="ab" style="left:1625px;top:543px" width="20" height="19" viewBox="0 0 20 19"><circle cx="10" cy="9.5" r="7.7" fill="none" stroke="#6b6c70" stroke-width="2.2"/></svg><svg class="ab" style="left:1653px;top:541px" width="26" height="22" viewBox="0 0 26 22"><path d="M6 9 L9.5 3 h7 L20 9" fill="none" stroke="#6b6c70" stroke-width="1.7"/><rect x="10" y="1" width="6" height="2.6" rx="1" fill="#6b6c70"/><rect x="1" y="8.5" width="24" height="3.4" rx="1.5" fill="#6b6c70"/><path d="M3 12 h20 l-2.2 8.5 h-15.6 z" fill="#6b6c70"/><path d="M8 13.5 v5.5 M11.3 13.5 v5.5 M14.6 13.5 v5.5 M17.9 13.5 v5.5" stroke="#fafafa" stroke-width="1.3"/></svg><svg class="ab" style="left:1686px;top:543px" width="20" height="19" viewBox="0 0 20 19"><path d="M1.5 2.5 a1.5 1.5 0 0 1 1.5 -1.5 h5.5 l10 10 -7.5 7.3 -10 -10 z" fill="#6b6c70"/><circle cx="5" cy="5" r="1.3" fill="#fafafa"/></svg><svg class="ab" style="left:1713px;top:543px" width="20" height="20" viewBox="0 0 20 20"><path d="M15 0.8 l4.2 4.2 -12.6 12.6 -5.6 1.4 1.4 -5.6 z" fill="#6b6c70"/><path d="M13.2 2.6 l4.2 4.2" stroke="#fafafa" stroke-width="1"/><path d="M4.6 13.4 l9.6 -9.6" stroke="#fafafa" stroke-width="0.7"/><path d="M2.2 17.8 l1.6 -0.4 -1.2 -1.2 z" fill="#fafafa"/></svg><svg class="ab" style="left:1741px;top:543px" width="18" height="19" viewBox="0 0 18 19"><path d="M1 3.5 h16" stroke="#6b6c70" stroke-width="1.7"/><path d="M6 3.5 v-1.5 a1 1 0 0 1 1 -1 h4 a1 1 0 0 1 1 1 v1.5" fill="none" stroke="#6b6c70" stroke-width="1.5"/><path d="M3 4.5 v11.5 a1.8 1.8 0 0 0 1.8 1.8 h8.4 a1.8 1.8 0 0 0 1.8 -1.8 v-11.5" fill="none" stroke="#6b6c70" stroke-width="1.7"/><path d="M6.5 6.5 v9 M9 6.5 v9 M11.5 6.5 v9" stroke="#6b6c70" stroke-width="1.4"/></svg><svg class="ab" style="left:1767px;top:543px" width="21" height="20" viewBox="0 0 21 20"><path d="M10.5 1 L19.5 5 V14.5 L10.5 19 L1.5 14.5 V5 Z" fill="#6b6c70"/><path d="M10.5 2.8 L17.5 5.6 L10.5 8.6 L3.5 5.6 Z" fill="#fafafa"/><path d="M11.6 10 L17.8 7.2 V13.6 L11.6 16.8 Z" fill="#fafafa"/></svg>
<div class="row" style="top:651px;height:124px;background:#f9f9f9"></div>
<div class="c" style="left:329.5px;top:661px">Abus Kettenschloss</div>
<div class="c" style="left:329.5px;top:677px">4804K/75 ohne Halter</div>
<div class="c" style="left:329.5px;top:693px">schwarz</div>
<div class="c" style="left:493.5px;top:661px">ABUS</div>
<div class="c" style="left:493.5px;top:677px">0063066</div>
<div class="c" style="left:762px;top:661px">11.72884</div>
<div class="c" style="left:843px;top:661px">4003318724831</div>
<div class="c" style="left:967px;top:661px">FuMo</div>
<div class="c" style="left:967px;top:677px">VeloConnect</div>
<div class="c" style="left:967px;top:693px">Test</div>
<div class="inp" style="left:1168px;top:661px;width:51px;padding-left:13px">2</div>
<div class="inp" style="left:1229px;top:661px;width:83px;padding-left:16px">Casq</div>
<svg class="ab" style="left:1294px;top:676px" width="11" height="7"><polyline points="1.2,1.2 5.5,5.5 9.8,1.2" fill="none" stroke="#444" stroke-width="2"/></svg>
<div class="inp" style="left:1321px;top:661px;width:96px;padding-left:14px">-2</div>
<div class="inp" style="left:1321px;top:697px;width:96px;padding-left:14px;background:#eee">8</div>
<div class="inp" style="left:1321px;top:734px;width:96px;padding-left:14px">0</div>
<div class="img" style="left:1427px;top:661px"></div>
<svg class="ab" style="left:1428px;top:662px" width="107" height="74" viewBox="0 0 107 74"><rect x="6" y="6" width="95" height="62" fill="#fff"/><path d="M55 7.8 C 42 7.8 32.5 17 32.5 30 C 33 43 46 55 55 67 M55 7.8 C 68 7.8 74.5 17 74.5 30 C 74 42 66 52 57 63" fill="none" stroke="#111" stroke-width="4"/><path d="M43 12 l-4 3.5 M66 12 l5 4 M34 36 l1.5 7 M75.5 35 l-1.5 7" stroke="#eee" stroke-width="1.3"/><path d="M52 64 l5 5" stroke="#111" stroke-width="4.5"/></svg>
<svg class="ab" style="left:1596px;top:668px" width="21" height="18" viewBox="0 0 21 18"><path d="M0.5 1.5 h3.5 l3 10.5 h10" fill="none" stroke="#ef7a0a" stroke-width="1.8"/><path d="M4.8 3.2 h15.2 v6.3 l-12.8 1.3 z" fill="#ef7a0a"/><rect x="6.5" y="12" width="11" height="2" fill="#ef7a0a"/><rect x="6.5" y="14" width="2.4" height="2.8" fill="#ef7a0a"/><rect x="15" y="14" width="2.4" height="2.8" fill="#ef7a0a"/></svg><svg class="ab" style="left:1625px;top:666px" width="20" height="19" viewBox="0 0 20 19"><circle cx="10" cy="9.5" r="7.7" fill="none" stroke="#6b6c70" stroke-width="2.2"/></svg><svg class="ab" style="left:1653px;top:664px" width="26" height="22" viewBox="0 0 26 22"><path d="M6 9 L9.5 3 h7 L20 9" fill="none" stroke="#6b6c70" stroke-width="1.7"/><rect x="10" y="1" width="6" height="2.6" rx="1" fill="#6b6c70"/><rect x="1" y="8.5" width="24" height="3.4" rx="1.5" fill="#6b6c70"/><path d="M3 12 h20 l-2.2 8.5 h-15.6 z" fill="#6b6c70"/><path d="M8 13.5 v5.5 M11.3 13.5 v5.5 M14.6 13.5 v5.5 M17.9 13.5 v5.5" stroke="#fafafa" stroke-width="1.3"/></svg><svg class="ab" style="left:1686px;top:666px" width="20" height="19" viewBox="0 0 20 19"><path d="M1.5 2.5 a1.5 1.5 0 0 1 1.5 -1.5 h5.5 l10 10 -7.5 7.3 -10 -10 z" fill="#6b6c70"/><circle cx="5" cy="5" r="1.3" fill="#fafafa"/></svg><svg class="ab" style="left:1713px;top:666px" width="20" height="20" viewBox="0 0 20 20"><path d="M15 0.8 l4.2 4.2 -12.6 12.6 -5.6 1.4 1.4 -5.6 z" fill="#6b6c70"/><path d="M13.2 2.6 l4.2 4.2" stroke="#fafafa" stroke-width="1"/><path d="M4.6 13.4 l9.6 -9.6" stroke="#fafafa" stroke-width="0.7"/><path d="M2.2 17.8 l1.6 -0.4 -1.2 -1.2 z" fill="#fafafa"/></svg><svg class="ab" style="left:1741px;top:666px" width="18" height="19" viewBox="0 0 18 19"><path d="M1 3.5 h16" stroke="#6b6c70" stroke-width="1.7"/><path d="M6 3.5 v-1.5 a1 1 0 0 1 1 -1 h4 a1 1 0 0 1 1 1 v1.5" fill="none" stroke="#6b6c70" stroke-width="1.5"/><path d="M3 4.5 v11.5 a1.8 1.8 0 0 0 1.8 1.8 h8.4 a1.8 1.8 0 0 0 1.8 -1.8 v-11.5" fill="none" stroke="#6b6c70" stroke-width="1.7"/><path d="M6.5 6.5 v9 M9 6.5 v9 M11.5 6.5 v9" stroke="#6b6c70" stroke-width="1.4"/></svg><svg class="ab" style="left:1767px;top:666px" width="21" height="20" viewBox="0 0 21 20"><path d="M10.5 1 L19.5 5 V14.5 L10.5 19 L1.5 14.5 V5 Z" fill="#6b6c70"/><path d="M10.5 2.8 L17.5 5.6 L10.5 8.6 L3.5 5.6 Z" fill="#fafafa"/><path d="M11.6 10 L17.8 7.2 V13.6 L11.6 16.8 Z" fill="#fafafa"/></svg>
<div class="row" style="top:775px;height:124px;background:#fff"></div>
<div class="c" style="left:329.5px;top:785px">Abus Antivol Phantom</div>
<div class="c" style="left:329.5px;top:801px">8950/180 mit Halter</div>
<div class="c" style="left:329.5px;top:817px">TexFL schwarz</div>
<div class="c" style="left:493.5px;top:785px">ABUS</div>
<div class="c" style="left:493.5px;top:801px">0057211</div>
<div class="c" style="left:762px;top:785px">11.72952</div>
<div class="c" style="left:843px;top:785px">4003318398025</div>
<div class="c" style="left:967px;top:785px">FuMo</div>
<div class="c" style="left:967px;top:801px">VeloConnect</div>
<div class="c" style="left:967px;top:817px">Test</div>
<div class="inp" style="left:1168px;top:785px;width:51px;padding-left:13px">7</div>
<div class="inp" style="left:1229px;top:785px;width:83px;padding-left:16px">Acce</div>
<svg class="ab" style="left:1294px;top:800px" width="11" height="7"><polyline points="1.2,1.2 5.5,5.5 9.8,1.2" fill="none" stroke="#444" stroke-width="2"/></svg>
<div class="inp" style="left:1321px;top:785px;width:96px;padding-left:14px">1</div>
<div class="inp" style="left:1321px;top:821px;width:96px;padding-left:14px;background:#eee">3</div>
<div class="inp" style="left:1321px;top:858px;width:96px;padding-left:14px">1</div>
<div class="img" style="left:1427px;top:785px"></div>
<svg class="ab" style="left:1428px;top:786px" width="107" height="74" viewBox="0 0 107 74"><rect x="6" y="6" width="95" height="62" fill="#fff"/><path fill-rule="evenodd" fill="#111" d="M53.5 5.8 C 68 5.8 77.5 18 77.5 32 C 77.5 44 70 52 62 56 L 50 56 C 38 50 30 42 30 30 C 30 16 40 5.8 53.5 5.8 Z M53.5 11.6 C 46 11.6 40.8 19 40.8 27 C 40.8 35.5 46 42.5 53.5 42.5 C 61 42.5 66.3 35.5 66.3 27 C 66.3 19 61 11.6 53.5 11.6 Z"/><path d="M38 44 C 42 52 46 56 50 60 L 58 67 L 67 59 C 71 54 75 48 77 40" fill="#131313"/><path d="M45.5 57.5 l6 -5" stroke="#d42222" stroke-width="1.5"/><rect x="49" y="52" width="17" height="13" rx="3" transform="rotate(-38 57.5 58.5)" fill="#222"/><path d="M66 47 C 70 43 73 38 74 33" fill="none" stroke="#555" stroke-width="0.8"/></svg>
<svg class="ab" style="left:1596px;top:792px" width="21" height="18" viewBox="0 0 21 18"><path d="M0.5 1.5 h3.5 l3 10.5 h10" fill="none" stroke="#ef7a0a" stroke-width="1.8"/><path d="M4.8 3.2 h15.2 v6.3 l-12.8 1.3 z" fill="#ef7a0a"/><rect x="6.5" y="12" width="11" height="2" fill="#ef7a0a"/><rect x="6.5" y="14" width="2.4" height="2.8" fill="#ef7a0a"/><rect x="15" y="14" width="2.4" height="2.8" fill="#ef7a0a"/></svg><svg class="ab" style="left:1625px;top:790px" width="20" height="19" viewBox="0 0 20 19"><circle cx="10" cy="9.5" r="7.7" fill="none" stroke="#6b6c70" stroke-width="2.2"/></svg><svg class="ab" style="left:1653px;top:788px" width="26" height="22" viewBox="0 0 26 22"><path d="M6 9 L9.5 3 h7 L20 9" fill="none" stroke="#6b6c70" stroke-width="1.7"/><rect x="10" y="1" width="6" height="2.6" rx="1" fill="#6b6c70"/><rect x="1" y="8.5" width="24" height="3.4" rx="1.5" fill="#6b6c70"/><path d="M3 12 h20 l-2.2 8.5 h-15.6 z" fill="#6b6c70"/><path d="M8 13.5 v5.5 M11.3 13.5 v5.5 M14.6 13.5 v5.5 M17.9 13.5 v5.5" stroke="#fafafa" stroke-width="1.3"/></svg><svg class="ab" style="left:1686px;top:790px" width="20" height="19" viewBox="0 0 20 19"><path d="M1.5 2.5 a1.5 1.5 0 0 1 1.5 -1.5 h5.5 l10 10 -7.5 7.3 -10 -10 z" fill="#6b6c70"/><circle cx="5" cy="5" r="1.3" fill="#fafafa"/></svg><svg class="ab" style="left:1713px;top:790px" width="20" height="20" viewBox="0 0 20 20"><path d="M15 0.8 l4.2 4.2 -12.6 12.6 -5.6 1.4 1.4 -5.6 z" fill="#6b6c70"/><path d="M13.2 2.6 l4.2 4.2" stroke="#fafafa" stroke-width="1"/><path d="M4.6 13.4 l9.6 -9.6" stroke="#fafafa" stroke-width="0.7"/><path d="M2.2 17.8 l1.6 -0.4 -1.2 -1.2 z" fill="#fafafa"/></svg><svg class="ab" style="left:1741px;top:790px" width="18" height="19" viewBox="0 0 18 19"><path d="M1 3.5 h16" stroke="#6b6c70" stroke-width="1.7"/><path d="M6 3.5 v-1.5 a1 1 0 0 1 1 -1 h4 a1 1 0 0 1 1 1 v1.5" fill="none" stroke="#6b6c70" stroke-width="1.5"/><path d="M3 4.5 v11.5 a1.8 1.8 0 0 0 1.8 1.8 h8.4 a1.8 1.8 0 0 0 1.8 -1.8 v-11.5" fill="none" stroke="#6b6c70" stroke-width="1.7"/><path d="M6.5 6.5 v9 M9 6.5 v9 M11.5 6.5 v9" stroke="#6b6c70" stroke-width="1.4"/></svg><svg class="ab" style="left:1767px;top:790px" width="21" height="20" viewBox="0 0 21 20"><path d="M10.5 1 L19.5 5 V14.5 L10.5 19 L1.5 14.5 V5 Z" fill="#6b6c70"/><path d="M10.5 2.8 L17.5 5.6 L10.5 8.6 L3.5 5.6 Z" fill="#fafafa"/><path d="M11.6 10 L17.8 7.2 V13.6 L11.6 16.8 Z" fill="#fafafa"/></svg>
<div class="row" style="top:899px;height:124px;background:#f9f9f9"></div>
<div class="c" style="left:329.5px;top:909px">Abus Spiralkabelschloss</div>
<div class="c" style="left:493.5px;top:909px">ABUS</div>
<div class="c" style="left:762px;top:909px">11.72961</div>
<div class="c" style="left:843px;top:909px">4003318200199</div>
<div class="c" style="left:967px;top:909px">FuMo</div>
<div class="inp" style="left:1168px;top:909px;width:51px;padding-left:13px"></div>
<div class="inp" style="left:1229px;top:909px;width:83px;padding-left:16px"></div>
<svg class="ab" style="left:1294px;top:924px" width="11" height="7"><polyline points="1.2,1.2 5.5,5.5 9.8,1.2" fill="none" stroke="#444" stroke-width="2"/></svg>
<div class="inp" style="left:1321px;top:909px;width:96px;padding-left:14px"></div>
<div class="inp" style="left:1321px;top:945px;width:96px;padding-left:14px;background:#eee"></div>
<div class="inp" style="left:1321px;top:982px;width:96px;padding-left:14px"></div>
<div class="img" style="left:1427px;top:909px"></div>
<svg class="ab" style="left:1428px;top:910px" width="107" height="74" viewBox="0 0 107 74"><rect x="6" y="6" width="95" height="62" fill="#fff"/><ellipse cx="53" cy="14" rx="8.5" ry="7.5" fill="#111"/></svg>
<svg class="ab" style="left:1596px;top:916px" width="21" height="18" viewBox="0 0 21 18"><path d="M0.5 1.5 h3.5 l3 10.5 h10" fill="none" stroke="#ef7a0a" stroke-width="1.8"/><path d="M4.8 3.2 h15.2 v6.3 l-12.8 1.3 z" fill="#ef7a0a"/><rect x="6.5" y="12" width="11" height="2" fill="#ef7a0a"/><rect x="6.5" y="14" width="2.4" height="2.8" fill="#ef7a0a"/><rect x="15" y="14" width="2.4" height="2.8" fill="#ef7a0a"/></svg><svg class="ab" style="left:1625px;top:914px" width="20" height="19" viewBox="0 0 20 19"><circle cx="10" cy="9.5" r="7.7" fill="none" stroke="#6b6c70" stroke-width="2.2"/></svg><svg class="ab" style="left:1653px;top:912px" width="26" height="22" viewBox="0 0 26 22"><path d="M6 9 L9.5 3 h7 L20 9" fill="none" stroke="#6b6c70" stroke-width="1.7"/><rect x="10" y="1" width="6" height="2.6" rx="1" fill="#6b6c70"/><rect x="1" y="8.5" width="24" height="3.4" rx="1.5" fill="#6b6c70"/><path d="M3 12 h20 l-2.2 8.5 h-15.6 z" fill="#6b6c70"/><path d="M8 13.5 v5.5 M11.3 13.5 v5.5 M14.6 13.5 v5.5 M17.9 13.5 v5.5" stroke="#fafafa" stroke-width="1.3"/></svg><svg class="ab" style="left:1686px;top:914px" width="20" height="19" viewBox="0 0 20 19"><path d="M1.5 2.5 a1.5 1.5 0 0 1 1.5 -1.5 h5.5 l10 10 -7.5 7.3 -10 -10 z" fill="#6b6c70"/><circle cx="5" cy="5" r="1.3" fill="#fafafa"/></svg><svg class="ab" style="left:1713px;top:914px" width="20" height="20" viewBox="0 0 20 20"><path d="M15 0.8 l4.2 4.2 -12.6 12.6 -5.6 1.4 1.4 -5.6 z" fill="#6b6c70"/><path d="M13.2 2.6 l4.2 4.2" stroke="#fafafa" stroke-width="1"/><path d="M4.6 13.4 l9.6 -9.6" stroke="#fafafa" stroke-width="0.7"/><path d="M2.2 17.8 l1.6 -0.4 -1.2 -1.2 z" fill="#fafafa"/></svg><svg class="ab" style="left:1741px;top:914px" width="18" height="19" viewBox="0 0 18 19"><path d="M1 3.5 h16" stroke="#6b6c70" stroke-width="1.7"/><path d="M6 3.5 v-1.5 a1 1 0 0 1 1 -1 h4 a1 1 0 0 1 1 1 v1.5" fill="none" stroke="#6b6c70" stroke-width="1.5"/><path d="M3 4.5 v11.5 a1.8 1.8 0 0 0 1.8 1.8 h8.4 a1.8 1.8 0 0 0 1.8 -1.8 v-11.5" fill="none" stroke="#6b6c70" stroke-width="1.7"/><path d="M6.5 6.5 v9 M9 6.5 v9 M11.5 6.5 v9" stroke="#6b6c70" stroke-width="1.4"/></svg><svg class="ab" style="left:1767px;top:914px" width="21" height="20" viewBox="0 0 21 20"><path d="M10.5 1 L19.5 5 V14.5 L10.5 19 L1.5 14.5 V5 Z" fill="#6b6c70"/><path d="M10.5 2.8 L17.5 5.6 L10.5 8.6 L3.5 5.6 Z" fill="#fafafa"/><path d="M11.6 10 L17.8 7.2 V13.6 L11.6 16.8 Z" fill="#fafafa"/></svg>
<div class="ab" style="left:1766px;top:868px;width:49px;height:49px;border-radius:50%;background:#d4df00"></div>
<svg class="ab" style="left:1778px;top:880px" width="25" height="25"><path d="M12.5 0.5 v24 M0.5 12.5 h24" stroke="#1e2b2b" stroke-width="3.4"/></svg>
<svg class="ab" style="left:714px;top:256px" width="16" height="21" viewBox="0 0 16 21"><path d="M2.5 2 V16.5 L5.5 13.5 L8 18.5 L10.5 17 L8 12.5 H13.5 Z" fill="#ffff00" stroke="#000" stroke-width="1.2" stroke-linejoin="round"/></svg>
</body></html>
